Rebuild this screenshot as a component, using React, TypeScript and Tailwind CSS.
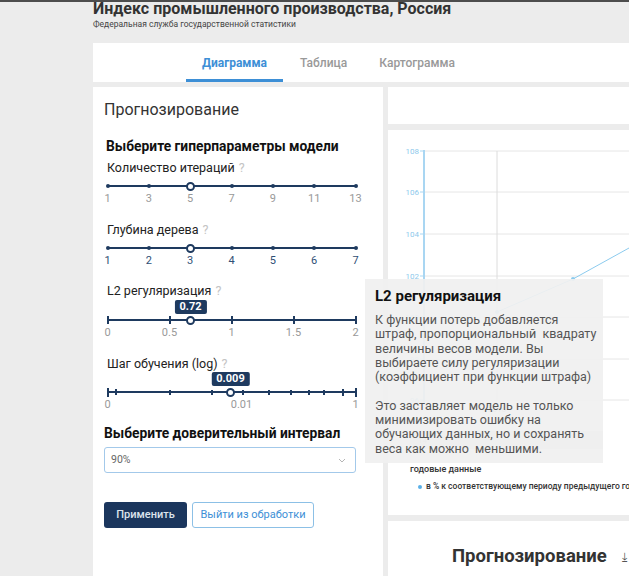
import React from 'react';

const TW = 248;

type SliderProps = {
  dots?: number[];
  ticks?: { x: number; h: number }[];
  labels: { x: number; text: string }[];
  handle: number;
  bubble?: string;
  labelClass: string;
};

const Slider: React.FC<SliderProps> = ({ dots = [], ticks = [], labels, handle, bubble, labelClass }) => (
  <div className="relative h-[20px] w-[249px] ml-[3px]">
    <div className="absolute left-0 top-0 h-[2px] w-[249px] bg-[#1e3a5f]" />
    {dots.map((x, i) => (
      <div
        key={'d' + i}
        className="absolute top-[-1px] h-[4px] w-[4px] rounded-full bg-[#1e3a5f]"
        style={{ left: x * TW - 1.5 }}
      />
    ))}
    {ticks.map((t, i) => (
      <div
        key={'t' + i}
        className="absolute w-[2px] bg-[#1e3a5f]"
        style={{ left: t.x * TW - 0.5, top: 1 - t.h / 2, height: t.h }}
      />
    ))}
    <div
      className="absolute top-[-3.5px] h-[9px] w-[9px] rounded-full border-2 border-[#1e3a5f] bg-white"
      style={{ left: handle * TW - 4 }}
    />
    {bubble && (
      <div
        className="absolute top-[-19px] -translate-x-1/2 rounded-[2px] bg-[#1e3a5f] px-[5px] text-[11px] font-bold leading-[14px] text-white"
        style={{ left: handle * TW + 0.5 }}
      >
        {bubble}
      </div>
    )}
    {labels.map((l, i) => (
      <div
        key={'l' + i}
        className={`absolute top-[8px] -translate-x-1/2 text-[11px] leading-[12px] ${labelClass}`}
        style={{ left: l.x * TW + 0.5 }}
      >
        {l.text}
      </div>
    ))}
  </div>
);

const Q = () => <span className="ml-[4px] text-[#c4c4c4]">?</span>;

const even = (n: number) => Array.from({ length: n }, (_, i) => i / (n - 1));
const px = (x: number) => (x - 107) / TW;

const yTicks = [
  { v: '108', y: 21 },
  { v: '106', y: 62 },
  { v: '104', y: 104 },
  { v: '102', y: 146 },
  { v: '100', y: 187 },
  { v: '98', y: 229 },
  { v: '96', y: 270 },
];

const Chart = () => (
  <svg width="284" height="332" className="block">
    {yTicks.map((t) => (
      <g key={t.v}>
        <line x1="37" x2="284" y1={t.y} y2={t.y} stroke="#e6e6e6" strokeWidth="1" />
        <line x1="32" x2="36" y1={t.y} y2={t.y} stroke="#a9d6f2" strokeWidth="1" />
        <text x="31" y={t.y + 3} textAnchor="end" fontSize="8" fill="#8ec9ec" fontFamily="Roboto, sans-serif">
          {t.v}
        </text>
      </g>
    ))}
    <line x1="109" x2="109" y1="21" y2="270" stroke="#dcdcdc" strokeWidth="1" />
    <line x1="36" x2="36" y1="20" y2="272" stroke="#a9d6f2" strokeWidth="2" />
    <text x="109" y="282" textAnchor="middle" fontSize="8" fill="#999" fontFamily="Roboto, sans-serif">
      2016
    </text>
    <rect x="22" y="301" width="193" height="18" fill="#e4e4e4" />
    <text x="30" y="313" fontSize="8" fill="#999" fontFamily="Roboto, sans-serif">
      14
    </text>
    <polyline points="109,182 185,149 241,118 284,94" fill="none" stroke="#8ccbee" strokeWidth="1" />
    <circle cx="109" cy="182" r="2" fill="#8ccbee" />
    <circle cx="185" cy="149" r="2" fill="#8ccbee" />
  </svg>
);

export default function App() {
  return (
    <div className="relative h-[576px] w-[629px] overflow-hidden bg-[#ececec] font-['Roboto',sans-serif]">
      <div className="h-[2px] w-full bg-[#4d4d4d]" />
      <div className="pl-[93px]">
        <div className="mt-[-1px] whitespace-nowrap text-[16px] font-bold leading-[16px] text-[#333]">
          Индекс промышленного производства, Россия
        </div>
        <div className="mt-[2px] whitespace-nowrap text-[8.5px] leading-[10px] text-[#444]">
          Федеральная служба государственной статистики
        </div>
        <div className="mt-[14px] flex h-[39px] w-[640px] gap-[1px] bg-white pl-[93px]">
          <div className="flex items-center border-b-[3px] border-[#3d8fd6] px-[16px] pt-[3px] text-[12px] font-bold text-[#3d8fd6]">
            Диаграмма
          </div>
          <div className="flex items-center px-[16px] text-[12px] font-medium text-[#999]">Таблица</div>
          <div className="flex items-center px-[15px] text-[12px] font-medium text-[#999]">Картограмма</div>
        </div>
        <div className="mt-[5px] flex gap-[5px]">
          <div className="h-[500px] w-[290px] shrink-0 bg-white pl-[11px] pt-[13px]">
            <div className="text-[16px] leading-[20px] text-[#333]">Прогнозирование</div>
            <div className="ml-[2px] mt-[17px] text-[13.8px] font-bold leading-[18px] text-[#111]">
              Выберите гиперпараметры модели
            </div>
            <div className="ml-[3px] mt-[5px] text-[12.5px] leading-[16px] text-[#222]">
              Количество итераций
              <Q />
            </div>
            <div className="mt-[9px]">
              <Slider
                dots={even(7)}
                handle={2 / 6}
                labels={['1', '3', '5', '7', '9', '11', '13'].map((t, i) => ({ x: i / 6, text: t }))}
                labelClass="text-[#999]"
              />
            </div>
            <div className="ml-[3px] mt-[17px] text-[12.5px] leading-[16px] text-[#222]">
              Глубина дерева
              <Q />
            </div>
            <div className="mt-[9px]">
              <Slider
                dots={even(7)}
                handle={2 / 6}
                labels={['1', '2', '3', '4', '5', '6', '7'].map((t, i) => ({ x: i / 6, text: t }))}
                labelClass="text-[#2f4f75]"
              />
            </div>
            <div className="ml-[3px] mt-[16px] text-[12.5px] leading-[16px] text-[#222]">
              L2 регуляризация
              <Q />
            </div>
            <div className="mt-[20px]">
              <Slider
                ticks={even(5).map((x) => ({ x, h: 8 }))}
                handle={px(190)}
                bubble="0.72"
                labels={['0', '0.5', '1', '1.5', '2'].map((t, i) => ({ x: i / 4, text: t }))}
                labelClass="text-[#999]"
              />
            </div>
            <div className="ml-[3px] mt-[17px] text-[12.5px] leading-[16px] text-[#222]">
              Шаг обучения (log)
              <Q />
            </div>
            <div className="mt-[19px]">
              <Slider
                ticks={[
                  { x: 0, h: 9 },
                  { x: px(115), h: 6 },
                  { x: px(169), h: 5 },
                  { x: px(211), h: 5 },
                  { x: px(242), h: 5 },
                  { x: px(268), h: 5 },
                  { x: px(290), h: 5 },
                  { x: px(308), h: 5 },
                  { x: px(323), h: 5 },
                  { x: px(342), h: 7 },
                  { x: 1, h: 9 },
                ]}
                handle={px(230)}
                bubble="0.009"
                labels={[
                  { x: 0, text: '0' },
                  { x: px(241), text: '0.01' },
                  { x: 1, text: '1' },
                ]}
                labelClass="text-[#999]"
              />
            </div>
            <div className="mt-[13px] text-[13.8px] font-bold leading-[18px] text-[#111]">
              Выберите доверительный интервал
            </div>
            <div className="mt-[5px] flex h-[26px] w-[252px] items-center justify-between rounded-[3px] border border-[#a3c9ea] pl-[6px] pr-[9px]">
              <span className="text-[10.5px] text-[#666]">90%</span>
              <svg width="8" height="5" viewBox="0 0 8 5">
                <path d="M1 1l3 3 3-3" fill="none" stroke="#b5b5b5" strokeWidth="1" />
              </svg>
            </div>
            <div className="mt-[29px] flex gap-[5px]">
              <button className="h-[26px] w-[83px] rounded-[3px] bg-[#1b365d] text-[11px] font-medium text-[#dde4ec]">
                Применить
              </button>
              <button className="h-[26px] w-[122px] rounded-[3px] border border-[#8cc0e6] bg-white text-[11px] font-normal text-[#3d8fd6]">
                Выйти из обработки
              </button>
            </div>
          </div>
          <div className="flex w-[284px] shrink-0 flex-col gap-[6px]">
            <div className="h-[37px] bg-white" />
            <div className="h-[385px] bg-white">
              <Chart />
              <div className="ml-[22px] mt-[2px] text-[9px] font-medium leading-[11px] text-[#333]">годовые данные</div>
              <div className="ml-[30px] mt-[6px] flex items-center gap-[4px] whitespace-nowrap text-[8.5px] font-medium leading-[11px] text-[#333]">
                <span className="h-[4px] w-[4px] rounded-full bg-[#5ab0e8]" />
                в % к соответствующему периоду предыдущего года
              </div>
            </div>
            <div className="flex h-[80px] items-start bg-white pl-[64px] pt-[22px]">
              <span className="text-[18.5px] font-bold leading-[26px] text-[#333]">Прогнозирование</span>
              <span className="ml-[15px] mt-[8px] text-[12px] leading-[12px] text-[#555]">⤓</span>
            </div>
          </div>
        </div>
      </div>

      <div className="absolute left-[365px] top-[279px] h-[184px] w-[238px] bg-[rgba(240,240,240,0.93)] pl-[10px] pt-[8px]">
        <div className="text-[15px] font-bold leading-[18px] text-[#111]">L2 регуляризация</div>
        <div className="mt-[8px] whitespace-pre text-[12.5px] leading-[14.3px] text-[#555]">
          {'К функции потерь добавляется\nштраф, пропорциональный  квадрату\nвеличины весов модели. Вы\nвыбираете силу регуляризации\n(коэффициент при функции штрафа)\n\nЭто заставляет модель не только\nминимизировать ошибку на\nобучающих данных, но и сохранять\nвеса как можно  меньшими.'}
        </div>
      </div>
    </div>
  );
}
